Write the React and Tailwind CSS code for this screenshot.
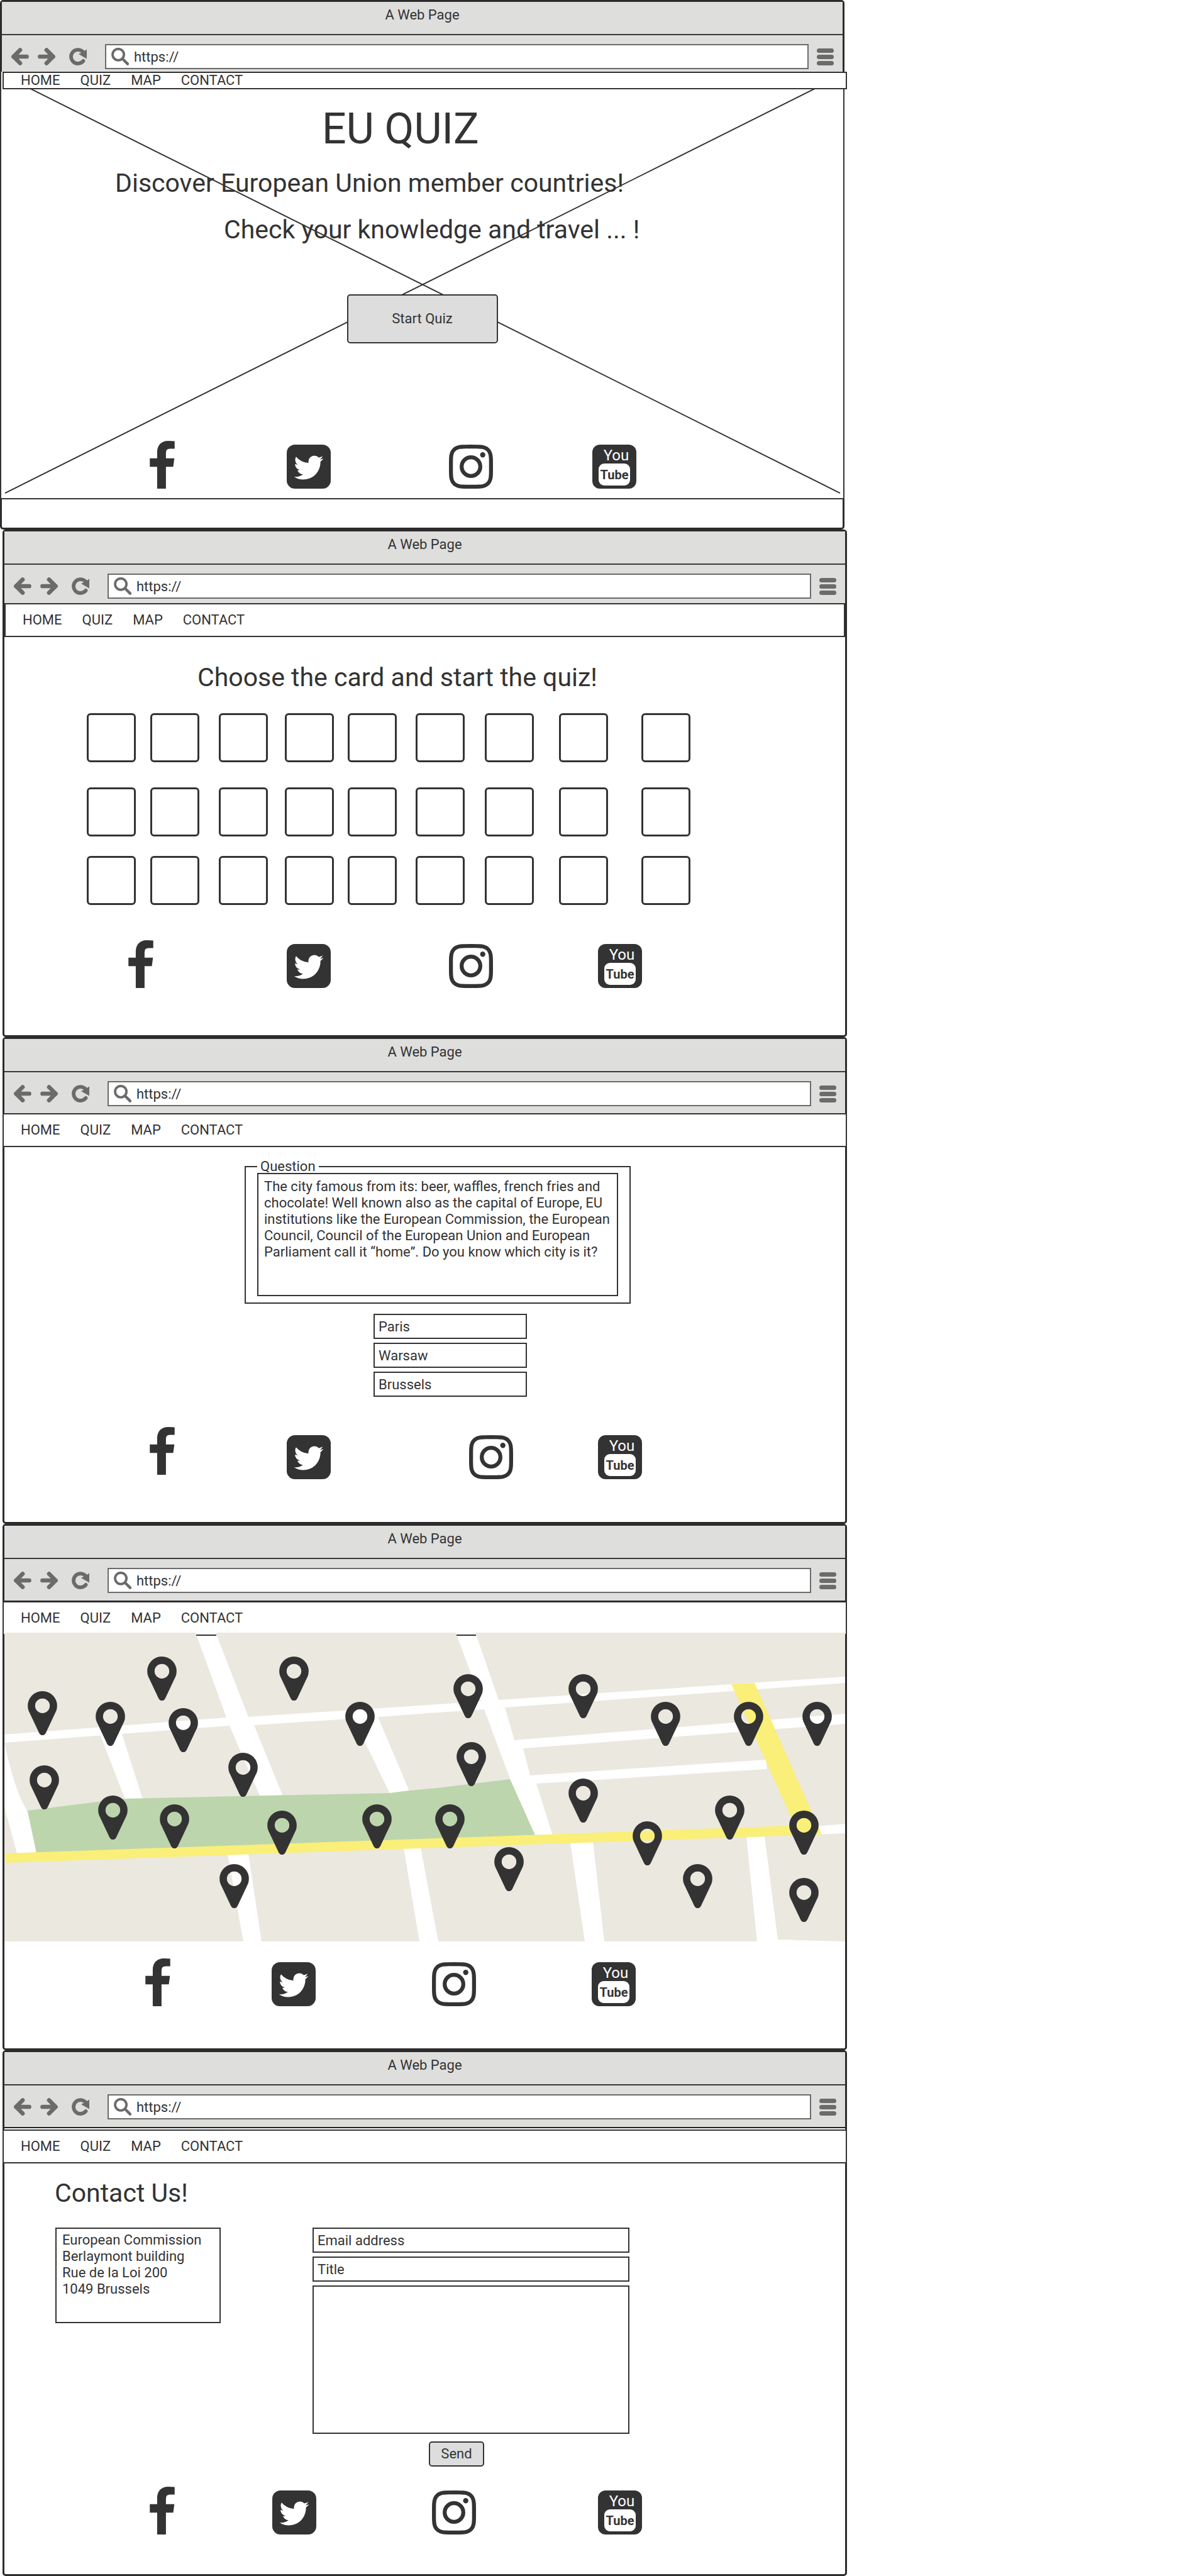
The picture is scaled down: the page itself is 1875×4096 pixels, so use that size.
import React from "react";

const FB_PATH =
  "M1343 12v264h-157q-86 0-116 36t-30 108v189h293l-39 296h-254v759h-306v-759h-255v-296h255v-218q0-186 104-288.5t277-102.5q147 0 228 12z";
const TWITTER_PATH =
  "M1408 610q-56 25-121 34 68-40 93-117-65 38-134 51-61-66-153-66-87 0-148.5 61.5t-61.5 148.5q0 29 5 48-129-7-242-65t-192-155q-29 50-29 106 0 114 91 175-47-1-100-26v2q0 75 50 133.5t123 72.5q-29 8-51 8-13 0-39-4 21 63 74.5 104t121.5 42q-116 90-261 90-26 0-50-3 148 94 322 94 112 0 210-35.5t168-95 120.5-137 75-162 24.5-168.5q0-18-1-27 63-45 105-109zm256-194v960q0 119-84.5 203.5t-203.5 84.5h-960q-119 0-203.5-84.5t-84.5-203.5v-960q0-119 84.5-203.5t203.5-84.5h960q119 0 203.5 84.5t84.5 203.5z";
const INSTAGRAM_PATH =
  "M1152 896q0-106-75-181t-181-75-181 75-75 181 75 181 181 75 181-75 75-181zm138 0q0 164-115 279t-279 115-279-115-115-279 115-279 279-115 279 115 115 279zm108-410q0 38-27 65t-65 27-65-27-27-65 27-65 65-27 65 27 27 65zm-502-220q-7 0-76.5-.5t-105.5 0-96.5 3-103 10-71.5 18.5q-50 20-88 58t-58 88q-11 29-18.5 71.5t-10 103-3 96.5 0 105.5.5 76.5-.5 76.5 0 105.5 3 96.5 10 103 18.5 71.5q20 50 58 88t88 58q29 11 71.5 18.5t103 10 96.5 3 105.5 0 76.5-.5 76.5.5 105.5 0 96.5-3 103-10 71.5-18.5q50-20 88-58t58-88q11-29 18.5-71.5t10-103 3-96.5 0-105.5-.5-76.5.5-76.5 0-105.5-3-96.5-10-103-18.5-71.5q-20-50-58-88t-88-58q-29-11-71.5-18.5t-103-10-96.5-3-105.5 0-76.5.5zm768 630q0 229-5 317-10 208-124 322t-322 124q-88 5-317 5t-317-5q-208-10-322-124t-124-322q-5-88-5-317t5-317q10-208 124-322t322-124q88-5 317-5t317 5q208 10 322 124t124 322q5 88 5 317z";
const MARKER_PATH =
  "M1152 640q0-106-75-181t-181-75-181 75-75 181 75 181 181 75 181-75 75-181zm256 0q0 109-33 179l-364 774q-16 33-47.5 52t-67.5 19-67.5-19-46.5-52l-365-774q-33-70-33-179 0-212 150-362t362-150 362 150 150 362z";

function ArrowIcon({ forward }) {
  return (
    <svg
      viewBox="0 0 96 96"
      className="size-7"
      fill="none"
      stroke="#6b6b6b"
      strokeWidth="23"
      strokeLinecap="round"
      strokeLinejoin="round"
      aria-hidden="true"
    >
      <path d={forward ? "M48 12L84 48L48 84M84 48H12" : "M48 12L12 48L48 84M12 48H84"} />
    </svg>
  );
}

function ReloadIcon() {
  return (
    <svg viewBox="0 0 97 96" className="size-7" aria-hidden="true">
      <path
        d="M78 72A38 38 0 1 1 74 20"
        fill="none"
        stroke="#6b6b6b"
        strokeWidth="20"
        strokeLinecap="round"
      />
      <path d="M97 8V60L52 34L76 22Z" fill="#6b6b6b" />
    </svg>
  );
}

function SearchIcon() {
  return (
    <svg viewBox="0 0 96 96" className="size-7 shrink-0" fill="none" stroke="#6b6b6b" aria-hidden="true">
      <circle cx="38" cy="37" r="31" strokeWidth="13" />
      <path d="M62 61L89 88" strokeWidth="15" strokeLinecap="round" />
    </svg>
  );
}

function BrowserBar({ id }) {
  return (
    <header className="border-b-2 border-[#231f20] bg-[#dededd]">
      <div className="border-b-2 border-[#3a3a3a] pt-2 pb-[17px] text-center text-[22px] leading-[26px]">
        A Web Page
      </div>
      <div className="flex items-center pt-[14px] pr-[14px] pb-3 pl-[15px]">
        <button type="button" aria-label="Back">
          <ArrowIcon />
        </button>
        <button type="button" aria-label="Forward" className="ml-[14px]">
          <ArrowIcon forward />
        </button>
        <button type="button" aria-label="Reload" className="ml-[22px]">
          <ReloadIcon />
        </button>
        <label
          htmlFor={id}
          className="ml-[29px] flex h-10 min-w-0 flex-1 items-center border-2 border-[#6b6b6b] bg-white pl-2"
        >
          <SearchIcon />
          <input
            id={id}
            type="text"
            aria-label="Address"
            defaultValue="https://"
            className="h-[26px] min-w-0 flex-1 pl-2 pt-[2px] text-[22px] leading-[26px] outline-none"
          />
        </label>
        <button type="button" aria-label="Menu" className="ml-[13px] flex w-[27px] flex-col gap-[3px]">
          <span className="h-[7px] rounded-full bg-[#6b6b6b]" />
          <span className="h-[7px] rounded-full bg-[#6b6b6b]" />
          <span className="h-[7px] rounded-full bg-[#6b6b6b]" />
        </button>
      </div>
    </header>
  );
}

function SiteNav({ className }) {
  return (
    <nav
      className={
        "relative flex items-center gap-8 border-2 border-[#333] bg-white pl-[27px] text-[22px] leading-6 " +
        className
      }
    >
      <a href="#home">HOME</a>
      <a href="#quiz">QUIZ</a>
      <a href="#map">MAP</a>
      <a href="#contact">CONTACT</a>
    </nav>
  );
}

function YouTubeIcon() {
  return (
    <svg viewBox="0 0 70 70" className="size-[70px]" aria-hidden="true">
      <rect width="70" height="70" rx="12" fill="#333" />
      <rect x="10" y="30" width="50" height="35" rx="9" fill="#fff" />
      <text
        x="38"
        y="25"
        textAnchor="middle"
        fill="#fff"
        fontSize="24"
        fontFamily="Roboto, sans-serif"
      >
        You
      </text>
      <text
        x="35"
        y="55"
        textAnchor="middle"
        fill="#333"
        fontSize="20"
        fontWeight="700"
        fontFamily="Roboto, sans-serif"
      >
        Tube
      </text>
    </svg>
  );
}

function SocialLinks({ className, facebookClass = "" }) {
  return (
    <div className={"relative grid items-end " + className}>
      <a href="#facebook" aria-label="Facebook" className={"w-10 " + facebookClass}>
        <svg viewBox="479 0 864 1664" className="h-[76px] w-10" fill="#333" aria-hidden="true">
          <path d={FB_PATH} />
        </svg>
      </a>
      <a href="#twitter" aria-label="Twitter">
        <svg viewBox="128 128 1536 1536" className="size-[70px]" fill="#333" aria-hidden="true">
          <path d={TWITTER_PATH} />
        </svg>
      </a>
      <a href="#instagram" aria-label="Instagram">
        <svg viewBox="128 128 1536 1536" className="size-[70px]" fill="#333" aria-hidden="true">
          <path d={INSTAGRAM_PATH} />
        </svg>
      </a>
      <a href="#youtube" aria-label="YouTube">
        <YouTubeIcon />
      </a>
    </div>
  );
}

function Frame({ name, className, children }) {
  return (
    <section
      aria-label={name}
      className={"rounded-[5px] border-[3px] border-[#2d2b2c] bg-white " + className}
    >
      <BrowserBar id={"address-" + name} />
      {children}
    </section>
  );
}

function HomePage() {
  return (
    <Frame name="home" className="mr-1 pb-[45px]">
      <div className="relative -mx-[3px] -mt-[10px] border-x-2 border-b-2 border-[#333] bg-white pb-[15px]">
        <svg
          viewBox="0 0 1339 680"
          preserveAspectRatio="none"
          className="absolute inset-0 size-full"
          stroke="#333"
          strokeWidth="2"
          aria-hidden="true"
        >
          <path d="M6 7L1334 672M1334 7L6 672" />
        </svg>
        <SiteNav className="-mr-[6px] ml-[2px]" />
        <h1 className="relative mt-[23px] ml-[510px] text-[68px] leading-[80px]">EU QUIZ</h1>
        <p className="relative mt-[22px] ml-[181px] text-[41px] leading-[48px]">
          Discover European Union member countries!
        </p>
        <p className="relative mt-[26px] ml-[354px] text-[41px] leading-[48px]">
          Check your knowledge and travel ... !
        </p>
        <button
          type="button"
          className="relative mx-auto mt-[79px] block h-[78px] w-[240px] rounded-[5px] border-2 border-[#333] bg-[#ddd] text-[22px] leading-[26px]"
        >
          Start Quiz
        </button>
        <SocialLinks className="mt-[155px] grid-cols-[218px_258px_228px_70px] pl-[236px]" />
      </div>
    </Frame>
  );
}

function CardRow({ row }) {
  return (
    <div className="grid grid-cols-[101px_109px_105px_100px_108px_110px_118px_131px_78px]">
      {Array.from({ length: 9 }, (_, i) => (
        <button
          key={i}
          type="button"
          aria-label={"Card " + (row * 9 + i + 1)}
          className="size-[78px] rounded-[6px] border-[3px] border-[#333]"
        />
      ))}
    </div>
  );
}

function CardsPage() {
  return (
    <Frame name="cards" className="ml-1 pb-[75px]">
      <SiteNav className="-mt-[7px] h-[54px]" />
      <h2 className="mt-10 ml-[307px] text-[41px] leading-[48px]">Choose the card and start the quiz!</h2>
      <div className="mt-[33px] pl-[131px]">
        <CardRow row={0} />
        <div className="mt-10 mb-[31px]">
          <CardRow row={1} />
        </div>
        <CardRow row={2} />
      </div>
      <SocialLinks className="mt-[56px] grid-cols-[252px_258px_237px_70px] pl-[197px]" />
    </Frame>
  );
}

function QuestionPage() {
  return (
    <Frame name="question" className="ml-1 pb-[68px]">
      <SiteNav className="-mx-[3px] -mt-[3px] h-[54px]" />
      <fieldset className="mt-[18px] ml-[382px] w-[614px] border-2 border-[#333] px-[18px] pb-[10px]">
        <legend className="px-[5px] text-[22px] leading-[26px]">Question</legend>
        <div className="-mt-[3px] h-[196px] border-2 border-[#333] px-[9px] pt-[7px] text-[22px] leading-[26px]">
          The city famous from its: beer, waffles, french fries and
          <br />
          chocolate! Well known also as the capital of Europe, EU
          <br />
          institutions like the European Commission, the European
          <br />
          Council, Council of the European Union and European
          <br />
          Parliament call it “home”. Do you know which city is it?
        </div>
      </fieldset>
      <div className="mt-4 ml-[587px] flex w-[244px] flex-col gap-[6px]">
        {["Paris", "Warsaw", "Brussels"].map((city) => (
          <input
            key={city}
            type="text"
            aria-label={city}
            defaultValue={city}
            className="h-10 border-2 border-[#333] px-[6px] text-[22px] leading-[26px]"
          />
        ))}
      </div>
      <SocialLinks
        className="mt-[48px] grid-cols-[218px_290px_205px_70px] pl-[231px]"
        facebookClass="pb-[7px]"
      />
    </Frame>
  );
}

const PINS = [
  [37, 93], [145, 110], [227, 38], [261, 120], [437, 38], [542, 110], [40, 211],
  [149, 259], [247, 273], [356, 191], [418, 283], [569, 273], [342, 368],
  [714, 66], [897, 66], [1028, 110], [1160, 110], [1269, 110], [719, 174],
  [685, 273], [897, 232], [779, 341], [999, 300], [1130, 259], [1248, 283],
  [1079, 368], [1248, 390],
];

function CityMap() {
  return (
    <div className="relative -mt-1 h-[491px]">
      <svg viewBox="0 0 1337 491" preserveAspectRatio="none" className="size-full" aria-hidden="true">
        <rect width="1337" height="491" fill="#ebe8e0" />
        <g fill="#fff">
          <path d="M304 0H336L388 134L397 147L442 258L407 261L376 190L358 148L353 135Z" />
          <path d="M0 162L353 135L388 134L689 114L758 109L763 122L689 127L594 134L397 147L358 148L0 175Z" />
          <path d="M718 0H749L786 107L796 119L811 171L825 184L836 227L846 240L872 323L844 323L804 232L763 122L758 109Z" />
          <path d="M786 107L1337 70V80L796 119Z" />
          <path d="M811 171L1337 129V145L825 184Z" />
          <path d="M836 227L1212 202V217L846 240Z" />
          <path d="M153 164L187 161L220 265L192 265Z" />
          <path d="M555 137L594 134L644 252L613 256L574 175Z" />
          <path d="M0 176Q17 253 36 283L51 351H20L0 277Z" />
          <path d="M355 352L388 351L409 491H380Z" />
          <path d="M635 343L662 342L690 491H660Z" />
          <path d="M900 334L936 332L954 491H923Z" />
          <path d="M1180 325L1209 324L1230 488L1337 491H1197Z" />
          <path d="M1290 308L1337 304V319L1290 321Z" />
        </g>
        <path d="M305 4H337M719 4H750" stroke="#333" strokeWidth="2" />
        <path
          d="M37 283L148 269L192 264L613 255L644 251L689 247L804 233L844 322L689 328L51 350Z"
          fill="#bcd5ac"
        />
        <path d="M1 351L689 327L1250 307L1290 303L1300 321L689 342L2 366Z" fill="#faef78" />
        <path d="M1156 82L1193 80L1300 321L1262 318L1250 291Z" fill="#faef78" />
      </svg>
      {PINS.map(([x, y]) => (
        <button
          key={x + "-" + y}
          type="button"
          aria-label="Map marker"
          className="absolute h-[70px] w-[47px]"
          style={{ left: (x / 1337) * 100 + "%", top: (y / 491) * 100 + "%" }}
        >
          <svg viewBox="384 128 1024 1536" className="size-full" fill="#333" aria-hidden="true">
            <path d={MARKER_PATH} />
          </svg>
        </button>
      ))}
    </div>
  );
}

function MapPage() {
  return (
    <Frame name="map" className="ml-1 pb-[67px]">
      <SiteNav className="-mx-[3px] -mt-px h-[54px]" />
      <CityMap />
      <SocialLinks className="mt-[27px] grid-cols-[201px_255px_254px_70px] pl-[224px]" />
    </Frame>
  );
}

function ContactPage() {
  return (
    <Frame name="contact" className="ml-1 pb-[63px]">
      <SiteNav className="-mx-[3px] mt-[2px] h-[54px]" />
      <h2 className="mt-[23px] ml-[80px] text-[41px] leading-[48px]">Contact Us!</h2>
      <div className="mt-[31px] ml-[81px] flex items-start gap-[146px]">
        <address className="h-[152px] w-[263px] border-2 border-[#333] px-[9px] pt-[5px] text-[22px] leading-[26px] not-italic">
          European Commission
          <br />
          Berlaymont building
          <br />
          Rue de la Loi 200
          <br />
          1049 Brussels
        </address>
        <form className="flex w-[504px] flex-col gap-[6px]" onSubmit={(e) => e.preventDefault()}>
          <input
            type="email"
            aria-label="Email address"
            placeholder="Email address"
            className="h-10 border-2 border-[#333] px-[6px] text-[22px] leading-[26px] placeholder:text-[#333] placeholder:opacity-100"
          />
          <input
            type="text"
            aria-label="Title"
            placeholder="Title"
            className="h-10 border-2 border-[#333] px-[6px] text-[22px] leading-[26px] placeholder:text-[#333] placeholder:opacity-100"
          />
          <textarea
            aria-label="Message"
            className="block h-[236px] resize-none border-2 border-[#333] px-[6px] text-[22px] leading-[26px]"
          />
          <button
            type="submit"
            className="mt-[6px] ml-[185px] h-10 w-[88px] rounded-[5px] border-2 border-[#333] bg-[#ddd] text-[22px] leading-[26px]"
          >
            Send
          </button>
        </form>
      </div>
      <SocialLinks className="mt-8 grid-cols-[195px_254px_264px_70px] pl-[231px]" />
    </Frame>
  );
}

export default function App() {
  return (
    <main className="grid grid-cols-[1347fr_528fr] bg-white font-['Roboto',sans-serif] text-[#333]">
      <div className="min-w-0">
        <HomePage />
        <CardsPage />
        <QuestionPage />
        <MapPage />
        <ContactPage />
      </div>
    </main>
  );
}
